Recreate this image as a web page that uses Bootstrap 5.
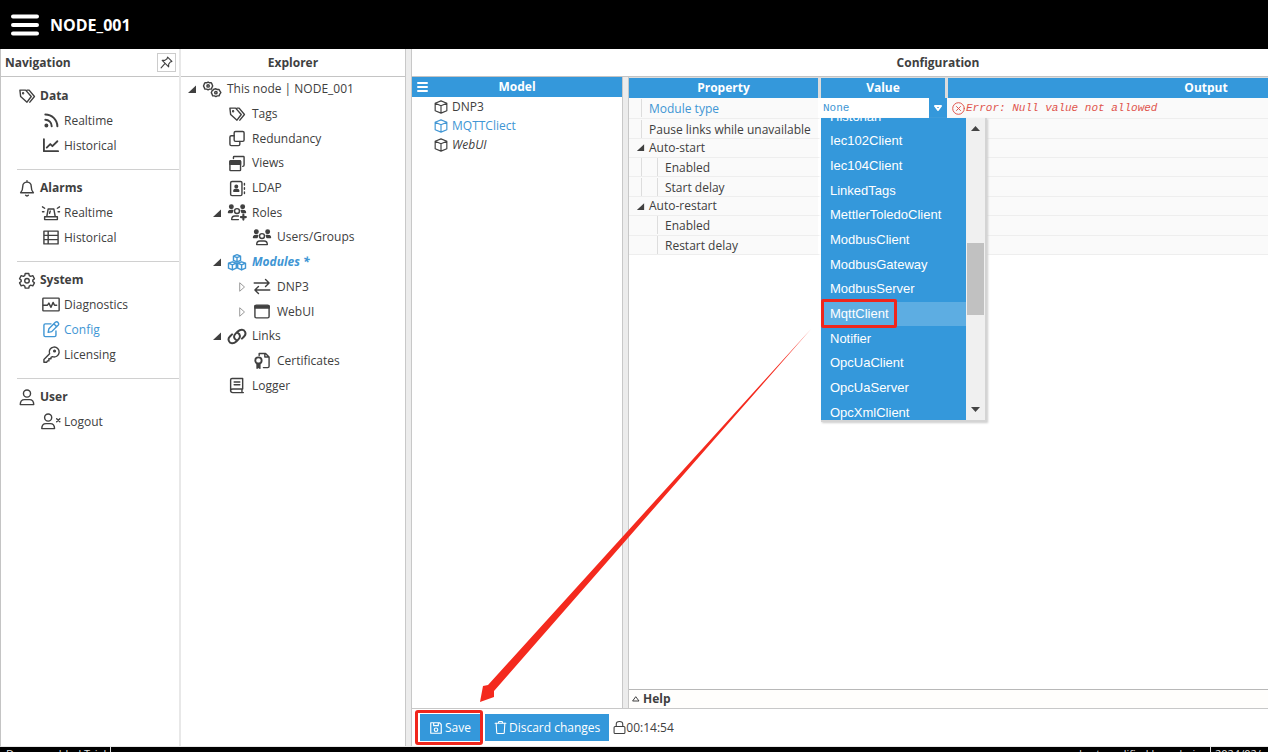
<!DOCTYPE html>
<html lang="en">
<head>
<meta charset="utf-8">
<meta name="viewport" content="width=device-width, initial-scale=1">
<title>NODE_001</title>
<link href="https://cdn.jsdelivr.net/npm/bootstrap@5.3.0/dist/css/bootstrap.min.css" rel="stylesheet">
<style>
:root{--blue:#3498db;--ink:#404040;--line:#c4c4c4;--soft:#e8e8e8;--red:#f0261c}
html,body{height:100%}
body{font:12px/18px "Open Sans","Noto Sans",sans-serif;color:var(--ink);overflow:hidden;background:#fff}
svg{fill:none;stroke:currentColor;stroke-width:2;stroke-linecap:round;stroke-linejoin:round;flex:none}
a{color:inherit;text-decoration:none}
button{color:inherit}
.sel{color:#4096d4}
.topbar{height:49px;padding-left:10px;gap:10px;background:#000;color:#fff}
.topbar h1{font-size:16px;line-height:20px}
.burger{stroke-width:4}
.work{height:calc(100vh - 54px);border-left:1px solid var(--line);border-bottom:1px solid var(--soft)}
.pane-title{height:28px;border-bottom:1px solid var(--line);font-size:12px;line-height:28px;font-weight:700;flex:none}
.nav-pane{width:180px;flex:none;border-right:2px solid var(--soft)}
.pin{width:19px;height:19px;border:1px solid #ccc;background:#fff;margin-right:3px}
.nav-group{margin-left:16px;padding:6px 0 11px;border-top:1px solid #d0d0d0}
.nav-group:first-child{border-top-color:transparent}
.nav-group h3{font-size:12px;line-height:24px;gap:3px}
.nav-group a{line-height:25px;padding-left:24px;gap:3px}
.ico{width:20px;height:17px}
.explorer{width:224px;flex:none}
.tree{display:grid;grid-auto-rows:1fr;height:321px;list-style:none}
.tree li{display:flex;align-items:center;padding-left:6px}
.tree .l1{padding-left:31px}
.tree .l2{padding-left:56px}
.twist{width:10px;height:10px;margin-right:5px;flex:none}
.tree .ico{margin-right:5px}
.split{width:7px;flex:none;background:#ececec;border:solid #c8c8c8;border-width:0 1px}
.config-clip{min-width:0;overflow:hidden}
/* the configuration pane runs on past the window edge */
.config{width:calc(100% + 196px);height:100%}
.model{width:210px;flex:none}
.blue-head{background:var(--blue);color:#fff;font-weight:700;height:20px;line-height:20px;padding:0 5px}
.head-end{width:11px}
.model-list{list-style:none}
.model-list li{height:19px;padding-left:22px;gap:4px}
.props{border-collapse:separate;border-spacing:0;table-layout:fixed;width:100%;height:178px}
.props th{background:var(--blue);color:#fff;text-align:center;height:21px;padding:0;border-right:3px solid #dcdcdc;border-top:1px solid #dcdcdc}
.props th:last-child{border-right:0}
.props td{padding:0;background:#fafafa;border-bottom:1px solid #eee;white-space:nowrap;line-height:20px}
.props td:first-child{border-right:3px solid #fff}
.c-name{width:192px}.c-value{width:127px}
.g0,.g1,.g2{flex:none}
.g0{width:12px}.g1{width:8px;border-left:1px solid #ddd}.g2{width:16px}.bar{border-left:1px solid #ddd}
.props td>.d-flex{height:18px}
.fold{width:9px;height:9px;margin:0 4px 0 7px}
.mono{font-family:"Liberation Mono",monospace;font-size:11px}
.err{color:#e0544c;gap:1px}
.err svg{stroke-width:1}
.props td>.combo{height:20px}
.combo select{appearance:none;border:0;background:#fff;color:#4096d4;width:108px;height:20px;padding:0 2px;line-height:20px;border-radius:0}
.combo .drop{width:18px;height:20px;background:var(--blue);color:#fff;border:0;padding:0}
.menu{position:absolute;left:0;top:100%;width:166px;height:304px;overflow:hidden;background:#f0f0f0;border:solid #d4d4d4;border-width:0 2px 2px 0;z-index:5;box-shadow:1px 1px 2px #ccc}
.menu-list{width:145px;background:var(--blue);color:#fff;font-family:"Liberation Sans",Arial,sans-serif;overflow:hidden}
/* thirteen options scrolled part-way through the first one */
.menu-items{height:321px;margin-top:-14px;display:grid;grid-auto-rows:1fr}
.menu-items button{border:0;background:none;color:#fff;text-align:left;padding:0 0 0 9px;font-size:13px;line-height:18px}
.menu-items .hot{background:#5dade2;position:relative}
.menu-items .hot::after{content:"";position:absolute;left:0;top:-3px;width:76px;height:29px;border:3px solid var(--red);border-radius:2px}
.menu .thumb{width:17px;height:72px;background:#c1c1c1;margin-top:112px}
.menu .sb{width:19px;color:#444}
.help{height:19px;border-top:1px solid #b8b8b8;padding-left:3px;gap:3px;background:#fffefc}
.help svg{stroke-width:1}
.foot{height:38px;border-top:1px solid #c8c8c8;padding-left:3px;flex:none}
.foot .act{background:var(--blue);color:#fff;border:0;border-radius:0;padding:0 9px;height:27px;font-size:12px;line-height:18px;gap:2px}
.save-box{border:3px solid var(--red);border-radius:3px;padding:1px 0 1px 2px;margin-right:2px}
.arrow{position:absolute;left:479px;top:329px;width:333px;height:374px;stroke:none;fill:#f42a1e;z-index:6;pointer-events:none}
.status{background:#000;color:#ddd;height:24px;padding-left:6px;font-size:11px;line-height:13px}
.status .stamp,.status .sep{border-left:1px solid #ddd}
.stamp{width:58px}
</style>
</head>
<body>
<svg width="0" height="0" class="d-none" aria-hidden="true">
<symbol id="tags" viewBox="0 0 24 24"><path d="M2 3h8l8 9-6 8-9-8zM12 3l3 0 7.500 9-6.500 8"/><circle cx="6.500" cy="7.500" r=".7"/></symbol>
<symbol id="rss" viewBox="0 0 24 24"><circle cx="5.500" cy="19" r="1.800" fill="currentColor"/><path d="M4 11a9 9 0 0 1 9 9M4 3.500A17 17 0 0 1 21 20" stroke-width="2.800"/></symbol>
<symbol id="chart" viewBox="0 0 24 24"><path d="M2 3v17h20M6 15l5-5 3 3 7-7" stroke-width="2.600"/></symbol>
<symbol id="bell" viewBox="0 0 24 24"><path d="M3 18c2-2 3-4 3-9a6 6 0 0 1 12 0c0 5 1 7 3 9zM12 1v2M10 21.500c1 1.500 3 1.500 4 0"/></symbol>
<symbol id="siren" viewBox="0 0 28 24"><path d="M5 22v-4h18v4zM8 18l2-11h8l2 11M12 13l1-3M2 11h2M26 11h-2M2 4l3 2M26 4l-3 2"/></symbol>
<symbol id="grid" viewBox="0 0 24 24"><path d="M2 3h20v18H2zM2 9h20M2 15h20M8 3v18"/></symbol>
<symbol id="gear" viewBox="0 0 24 24"><path d="M9.500 2h5l.7 3 2 1.200 3-1 2.300 4.300-2.300 2v1.800l2.300 2-2.300 4.300-3-1-2 1.200-.7 3h-5l-.7-3-2-1.200-3 1L1.500 15.300l2.300-2v-1.800l-2.300-2L3.800 5.200l3 1 2-1.200z"/><circle cx="12" cy="12.300" r="3.200"/></symbol>
<symbol id="gears" viewBox="0 0 28 24"><path d="M6.500 2.500l2-1 2 1h2.500l1 2 1 2.500-1 2-1 2.500h-2.500l-2 1-2-1H4l-1-2.500-1-2 1-2.500 1-2z"/><circle cx="8.500" cy="7" r="1.700"/><path d="M17 11.500l2.500-.5 2 1h2.500l1 2 1.500 2.500-1.500 2-1 2.500h-2.500l-2 1-2-1H15l-1-2.500-1-2 1-2.500z"/><circle cx="19.500" cy="16.500" r="1.700"/></symbol>
<symbol id="pulse" viewBox="0 0 26 24"><rect x="1.500" y="3" width="23" height="18" rx="1"/><path d="M2 13h6l2-3 3 6 3-7 2 4h3"/></symbol>
<symbol id="edit" viewBox="0 0 24 24"><path d="M12 4H4a2 2 0 0 0-2 2v14a2 2 0 0 0 2 2h13a2 2 0 0 0 2-2v-6M8 16l1-5 9.500-9.500q2-1 3.500.7 1.500 2 .3 3.300L13 15zM16 4l4 4"/></symbol>
<symbol id="key" viewBox="0 0 24 24"><path d="M10 11a7 7 0 1 1 4 4l-2 1v2H9v3H7l-1 2H2v-4z"/><circle cx="17" cy="7" r="1.200"/></symbol>
<symbol id="user" viewBox="0 0 24 24"><circle cx="12" cy="6.500" r="5"/><path d="M2.500 22c0-5 3-7 6-7h7c3 0 6 2 6 7z"/></symbol>
<symbol id="userx" viewBox="0 0 28 24"><circle cx="10" cy="6.500" r="5"/><path d="M1 22c0-5 3-7 6-7h6c3 0 6 2 6 7zM22 8l4.500 4.500M26.500 8L22 12.500"/></symbol>
<symbol id="copy" viewBox="0 0 24 24"><rect x="8" y="2" width="14" height="14" rx="2"/><path d="M8 8H4a2 2 0 0 0-2 2v10a2 2 0 0 0 2 2h10a2 2 0 0 0 2-2v-4"/></symbol>
<symbol id="views" viewBox="0 0 24 24"><path d="M7 5V3q0-1 1-1h13q1 0 1 1v11q0 2-2 2"/><rect x="2" y="8" width="15" height="14" rx="1"/><path d="M2 9h15v4H2z" fill="currentColor"/></symbol>
<symbol id="book" viewBox="0 0 24 24"><rect x="3" y="2" width="16" height="20" rx="2"/><circle cx="11" cy="9" r="1.800" fill="currentColor"/><path d="M7.500 16q0-3 3.500-3t3.500 3z" fill="currentColor"/><path d="M22.500 5v2M22.500 11v2M22.500 17v2"/></symbol>
<symbol id="group" viewBox="0 0 28 24"><g fill="currentColor"><circle cx="6" cy="4" r="2.500"/><circle cx="22" cy="4" r="2.500"/><path d="M2 12c0-3 2-3 6-3l-1 3zM26 12c0-3-2-3-6-3l1 3z"/></g><circle cx="14" cy="10" r="3.500"/><path d="M6.500 22c0-4 2-5 4.500-5h6c2.500 0 4.500 1 4.500 5z"/></symbol>
<symbol id="roles" viewBox="0 0 28 24"><g fill="currentColor"><circle cx="6" cy="4" r="2.500"/><circle cx="22" cy="4" r="2.500"/><path d="M2 12c0-3 2-3 6-3l-1 3zM26 12c0-3-2-3-6-3l1 3z"/></g><circle cx="14" cy="10" r="3.500"/><path d="M16 22H6.500c0-4 2-5 4.500-5h5"/><path d="M23 15v7M19.500 18.500h7" stroke-width="3"/></symbol>
<symbol id="cubes" viewBox="0 0 28 24"><path d="M14 1l5 2v6l-5 2-5-2V3zM9 3l5 2 5-2M14 5v6M7.500 11l5.500 2v7l-5.500 2.500L2 20v-7zM2 13l5.500 2.500L13 13M7.500 15.500v7M20.500 11l5.500 2v7l-5.500 2.500L15 20v-7zM15 13l5.500 2.500L26 13M20.500 15.500v7"/></symbol>
<symbol id="swap" viewBox="0 0 24 24"><path d="M1 7h21M17 2l5 5-5 5M23 17H2M7 12l-5 5 5 5"/></symbol>
<symbol id="win" viewBox="0 0 24 24"><rect x="2" y="3" width="20" height="18" rx="2"/><path d="M2 4h20v3H2z" fill="currentColor"/></symbol>
<symbol id="chain" viewBox="0 0 28 24"><path d="M13 17c-4-2-4-6-1-9l3-3c4-4 9-3 10 0 2 3 1 5-1 7l-3 3M15 7c4 2 4 6 1 9l-3 3c-4 4-9 3-10 0-2-3-1-5 1-7l3-3" stroke-width="2.800"/></symbol>
<symbol id="cert" viewBox="0 0 24 24"><path d="M8 5V2h9l5 5v13q0 2-2 2h-6M16 2v5h5"/><circle cx="7" cy="12" r="4.500" stroke-width="2.600"/><path d="M5 16v7l2-1.500L9 23v-7z" fill="currentColor"/></symbol>
<symbol id="log" viewBox="0 0 24 24"><path d="M20 17H6q-3 0-3 2.500T6 22h15M3 20V4q0-2 2-2h15v15M19 17v5M8 7h8M8 11h8"/></symbol>
<symbol id="cube" viewBox="0 0 24 24"><path d="M12 1.500l10 4v13l-10 4-10-4v-13zM2 5.500l10 4.500 10-4.500M12 10v12"/></symbol>
<symbol id="open" viewBox="0 0 10 10"><path d="M9 1.500V9H1z" fill="currentColor" stroke="none"/></symbol>
<symbol id="shut" viewBox="0 0 10 10"><path d="M3 1L7.500 5 3 9z" stroke="#999" stroke-width="1"/></symbol>
</svg>

<header class="topbar d-flex align-items-center">
  <button class="border-0 bg-transparent p-0 text-white d-flex" aria-label="Menu"><svg class="burger" width="30" height="22" viewBox="0 0 30 22"><path d="M3 2.500h24M3 11h24M3 19.500h24"/></svg></button>
  <h1 class="fw-bold m-0">NODE_001</h1>
</header>

<main class="work d-flex">
  <nav class="nav-pane">
    <div class="pane-title d-flex align-items-center justify-content-between ps-1"><span>Navigation</span>
      <button class="pin p-0 d-flex align-items-center justify-content-center" aria-label="Pin"><svg width="13" height="13" viewBox="0 0 24 24"><path d="M14 2l8 8-3 1-3 4v5L4 8h5l4-3zM9 14l-7 8"/></svg></button></div>
    <div>
      <section class="nav-group"><h3 class="d-flex align-items-center fw-bold m-0"><svg class="ico"><use href="#tags"/></svg>Data</h3>
        <a href="#" class="d-flex align-items-center"><svg class="ico"><use href="#rss"/></svg>Realtime</a>
        <a href="#" class="d-flex align-items-center"><svg class="ico"><use href="#chart"/></svg>Historical</a></section>
      <section class="nav-group"><h3 class="d-flex align-items-center fw-bold m-0"><svg class="ico"><use href="#bell"/></svg>Alarms</h3>
        <a href="#" class="d-flex align-items-center"><svg class="ico"><use href="#siren"/></svg>Realtime</a>
        <a href="#" class="d-flex align-items-center"><svg class="ico"><use href="#grid"/></svg>Historical</a></section>
      <section class="nav-group"><h3 class="d-flex align-items-center fw-bold m-0"><svg class="ico"><use href="#gear"/></svg>System</h3>
        <a href="#" class="d-flex align-items-center"><svg class="ico"><use href="#pulse"/></svg>Diagnostics</a>
        <a href="#" class="d-flex align-items-center sel"><svg class="ico"><use href="#edit"/></svg>Config</a>
        <a href="#" class="d-flex align-items-center"><svg class="ico"><use href="#key"/></svg>Licensing</a></section>
      <section class="nav-group"><h3 class="d-flex align-items-center fw-bold m-0"><svg class="ico"><use href="#user"/></svg>User</h3>
        <a href="#" class="d-flex align-items-center"><svg class="ico"><use href="#userx"/></svg>Logout</a></section>
    </div>
  </nav>

  <section class="explorer">
    <div class="pane-title text-center">Explorer</div>
    <ul class="tree m-0 p-0">
      <li><svg class="twist"><use href="#open"/></svg><svg class="ico"><use href="#gears"/></svg>This node | NODE_001</li>
      <li class="l1"><span class="twist"></span><svg class="ico"><use href="#tags"/></svg>Tags</li>
      <li class="l1"><span class="twist"></span><svg class="ico"><use href="#copy"/></svg>Redundancy</li>
      <li class="l1"><span class="twist"></span><svg class="ico"><use href="#views"/></svg>Views</li>
      <li class="l1"><span class="twist"></span><svg class="ico"><use href="#book"/></svg>LDAP</li>
      <li class="l1"><svg class="twist"><use href="#open"/></svg><svg class="ico"><use href="#roles"/></svg>Roles</li>
      <li class="l2"><span class="twist"></span><svg class="ico"><use href="#group"/></svg>Users/Groups</li>
      <li class="l1"><svg class="twist"><use href="#open"/></svg><svg class="ico sel"><use href="#cubes"/></svg><span class="sel fw-bold fst-italic">Modules *</span></li>
      <li class="l2"><svg class="twist"><use href="#shut"/></svg><svg class="ico"><use href="#swap"/></svg>DNP3</li>
      <li class="l2"><svg class="twist"><use href="#shut"/></svg><svg class="ico"><use href="#win"/></svg>WebUI</li>
      <li class="l1"><svg class="twist"><use href="#open"/></svg><svg class="ico"><use href="#chain"/></svg>Links</li>
      <li class="l2"><span class="twist"></span><svg class="ico"><use href="#cert"/></svg>Certificates</li>
      <li class="l1"><span class="twist"></span><svg class="ico"><use href="#log"/></svg>Logger</li>
    </ul>
  </section>
  <div class="split"></div>

  <section class="config-clip flex-fill">
    <div class="config d-flex flex-column">
      <div class="pane-title text-center">Configuration</div>
      <div class="d-flex flex-fill">
        <div class="model">
          <div class="blue-head d-flex align-items-center"><svg width="11" height="12" viewBox="0 0 11 12"><path d="M1 2h9M1 6h9M1 10h9"/></svg><span class="flex-fill text-center">Model</span><span class="head-end"></span></div>
          <ul class="model-list m-0 p-0">
            <li class="d-flex align-items-center"><svg width="14" height="14"><use href="#cube"/></svg>DNP3</li>
            <li class="d-flex align-items-center sel"><svg width="14" height="14"><use href="#cube"/></svg>MQTTCliect</li>
            <li class="d-flex align-items-center fst-italic"><svg width="14" height="14"><use href="#cube"/></svg>WebUI</li>
          </ul>
        </div>
        <div class="split"></div>
        <div class="flex-fill d-flex flex-column justify-content-between">
          <table class="props">
            <colgroup><col class="c-name"><col class="c-value"><col></colgroup>
            <thead><tr><th>Property</th><th>Value</th><th>Output</th></tr></thead>
            <tbody>
            <tr><td><div class="d-flex sel"><span class="g0"></span><span class="g1"></span><label for="mtype">Module type</label></div></td>
              <td><div class="combo d-flex position-relative">
                <select id="mtype" class="mono"><option>None</option></select>
                <button class="drop d-flex align-items-center justify-content-center" aria-label="Open list"><svg width="8" height="6" viewBox="0 0 8 6"><path d="M1 1h6L4 5z"/></svg></button>
                <div class="menu d-flex">
                  <div class="menu-list"><div class="menu-items">
                    <button>Historian</button><button>Iec102Client</button><button>Iec104Client</button><button>LinkedTags</button><button>MettlerToledoClient</button><button>ModbusClient</button><button>ModbusGateway</button><button>ModbusServer</button><button class="hot">MqttClient</button><button>Notifier</button><button>OpcUaClient</button><button>OpcUaServer</button><button>OpcXmlClient</button>
                  </div></div>
                  <div class="sb d-flex flex-column align-items-center justify-content-between py-2">
                    <svg width="9" height="5" viewBox="0 0 9 5"><path d="M0 5h9L4.500 0z" fill="currentColor" stroke="none"/></svg>
                    <div class="thumb mb-auto"></div>
                    <svg width="9" height="5" viewBox="0 0 9 5"><path d="M0 0h9L4.500 5z" fill="currentColor" stroke="none"/></svg>
                  </div>
                </div>
              </div></td>
              <td><div class="err d-flex align-items-center ps-1"><svg width="13" height="13" viewBox="0 0 13 13"><circle cx="6.500" cy="6.500" r="5.800"/><path d="M4.500 4.500l4 4M8.500 4.500l-4 4"/></svg><span class="mono fst-italic">Error: Null value not allowed</span></div></td></tr>
            <tr><td><div class="d-flex"><span class="g0"></span><span class="g1"></span>Pause links while unavailable</div></td><td></td><td></td></tr>
            <tr><td><div class="d-flex align-items-center"><svg class="fold"><use href="#open"/></svg>Auto-start</div></td><td></td><td></td></tr>
            <tr><td><div class="d-flex"><span class="g0"></span><span class="g2 bar"></span><span class="g1"></span>Enabled</div></td><td></td><td></td></tr>
            <tr><td><div class="d-flex"><span class="g0"></span><span class="g2 bar"></span><span class="g1"></span>Start delay</div></td><td></td><td></td></tr>
            <tr><td><div class="d-flex align-items-center"><svg class="fold"><use href="#open"/></svg>Auto-restart</div></td><td></td><td></td></tr>
            <tr><td><div class="d-flex"><span class="g0"></span><span class="g2"></span><span class="g1"></span>Enabled</div></td><td></td><td></td></tr>
            <tr><td><div class="d-flex"><span class="g0"></span><span class="g2"></span><span class="g1"></span>Restart delay</div></td><td></td><td></td></tr>
            </tbody>
          </table>
          <div class="help d-flex align-items-center fw-bold"><svg width="8" height="6" viewBox="0 0 8 6"><path d="M1 5h6L4 1z"/></svg>Help</div>
        </div>
      </div>
      <div class="foot d-flex align-items-center">
        <div class="save-box"><button class="act d-flex align-items-center"><svg width="14" height="14" viewBox="0 0 24 24"><path d="M3 3h15l3 3v15H3zM8 3v5h8V3"/><circle cx="12" cy="15" r="3"/></svg>Save</button></div>
        <button class="act d-flex align-items-center"><svg width="13" height="15" viewBox="0 0 24 26"><path d="M2 5h20M8 5l1-3h6l1 3M4 5l1 17q0 2 2 2h10q2 0 2-2l1-17"/></svg>Discard changes</button>
        <svg class="ms-1" width="13" height="15" viewBox="0 0 24 26"><rect x="2" y="11" width="20" height="13" rx="2"/><path d="M6 11V7q0-5 6-5t6 5v4"/></svg>00:14:54
      </div>
    </div>
  </section>
</main>
<svg class="arrow" viewBox="0 0 333 374" aria-hidden="true"><path d="M332 0L9 356l-5 1L1 373l14-5 0-6z"/></svg>

<footer class="status d-flex justify-content-between">
  <div class="d-flex"><span class="pe-1">Demo enabled Trial</span><span class="sep"></span></div>
  <div class="d-flex"><span class="pe-2">Last modified by: admin</span><span class="stamp ps-1">2024/02/</span></div>
</footer>
<script src="https://cdn.jsdelivr.net/npm/bootstrap@5.3.0/dist/js/bootstrap.bundle.min.js"></script>
</body>
</html>
